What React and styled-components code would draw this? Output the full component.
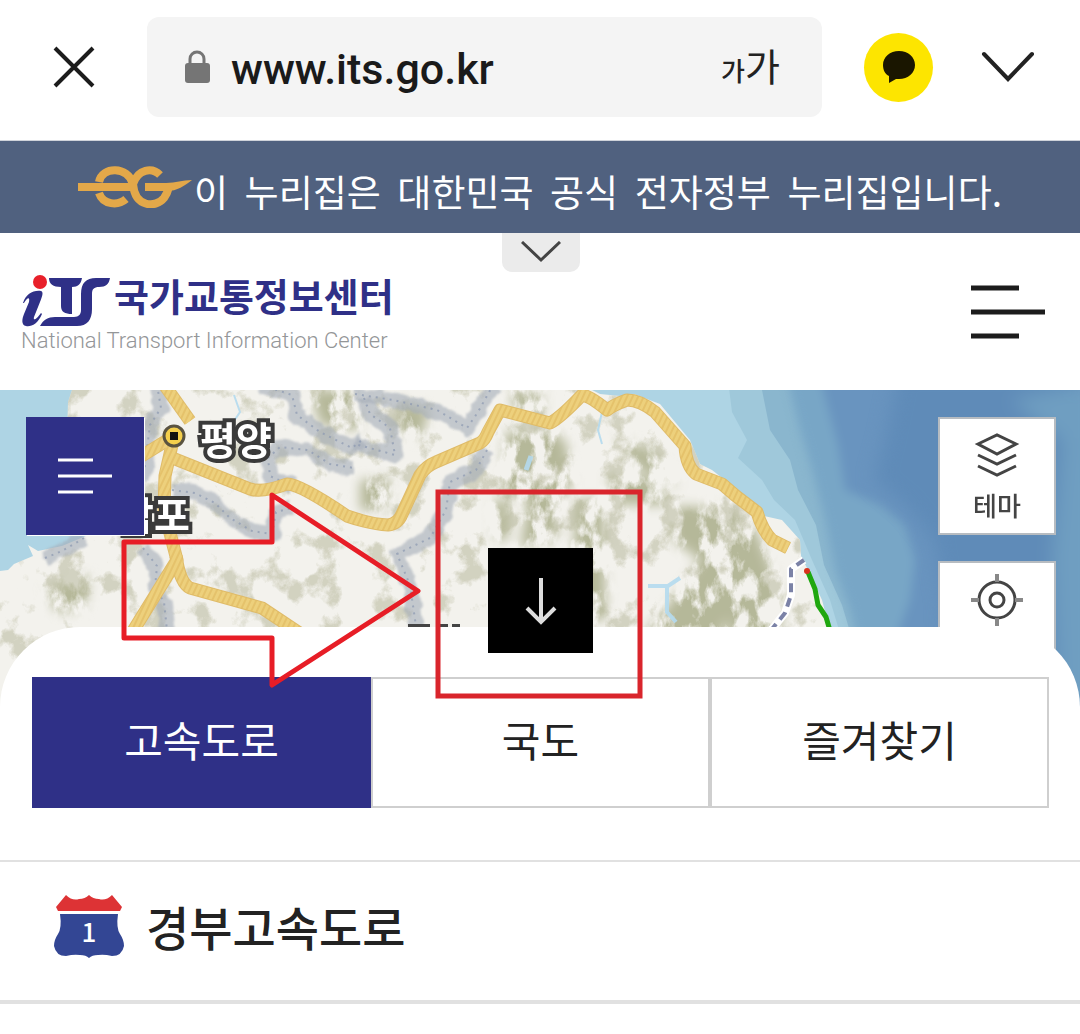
import React from "react";
import styled, { createGlobalStyle } from "styled-components";

const KR = `"Noto Sans CJK KR", "Noto Sans", sans-serif`;
const NAVY = "#2f3087";

const GlobalStyle = createGlobalStyle`
  * { box-sizing: border-box; }
  body { margin: 0; background: #fff; color: #222; font-family: ${KR}; }
  button { margin: 0; padding: 0; border: 0; background: none; color: inherit; font: inherit; cursor: pointer; }
  a { color: inherit; text-decoration: none; }
`;

const Page = styled.div`
  height: 100vh;
  overflow: hidden;
  display: flex;
  flex-direction: column;
`;

const BrowserBar = styled.header`
  flex: none;
  display: flex;
  align-items: center;
  height: 141px;
  padding: 0 45px 6px 46px;
  border-bottom: 1px solid #cfd3da;
`;

const IconButton = styled.button`
  flex: none;
  display: flex;
  align-items: center;
  justify-content: center;
  width: ${(p) => p.$size}px;
  height: ${(p) => p.$size}px;
`;

const AddressBar = styled.div`
  flex: 1;
  min-width: 0;
  display: flex;
  align-items: center;
  height: 100px;
  margin: 0 42px 0 46px;
  padding: 0 42px 0 36px;
  border-radius: 12px;
  background: #f4f4f4;
`;

const UrlInput = styled.input`
  flex: 1;
  min-width: 0;
  margin: 0 0 0 20px;
  padding: 4px 0 0;
  border: 0;
  outline: 0;
  background: none;
  color: #1a1a1a;
  font: 500 43px/56px Roboto, sans-serif;
`;

const TextSizeButton = styled.button`
  flex: none;
  display: flex;
  align-items: baseline;
  color: #222;
  font-size: 38px;
  line-height: 56px;
`;

const SmallGlyph = styled.span`
  font-size: 26px;
  font-weight: 500;
`;

const KakaoButton = styled(IconButton)`
  margin-right: 47px;
  border-radius: 50%;
  background: #fde500;
`;

const GovBanner = styled.div`
  flex: none;
  display: flex;
  align-items: center;
  justify-content: center;
  gap: 2px;
  height: 92px;
  background: #50617f;
  color: #fff;
`;

const GovText = styled.p`
  margin: 0;
  padding-top: 8px;
  font-size: 37px;
  line-height: 54px;
  white-space: pre;
`;

const SiteHeader = styled.div`
  flex: none;
  position: relative;
  display: flex;
  align-items: center;
  justify-content: space-between;
  height: 157px;
  padding: 0 34px 0 21px;
`;

const BannerToggle = styled.button`
  position: absolute;
  top: 0;
  left: 50%;
  display: flex;
  align-items: center;
  justify-content: center;
  width: 78px;
  height: 39px;
  padding-bottom: 2px;
  margin-left: -38px;
  border-radius: 0 0 10px 10px;
  background: #ebebeb;
`;

const Brand = styled.a`
  display: flex;
  flex-direction: column;
  padding-top: 6px;
`;

const BrandTop = styled.span`
  display: flex;
  align-items: center;
  gap: 4px;
  height: 52px;
`;

const BrandName = styled.span`
  margin-top: -12px;
  color: ${NAVY};
  font-size: 38px;
  font-weight: 700;
  line-height: 52px;
`;

const BrandSub = styled.span`
  color: #949698;
  font: 300 22px/28px Roboto, sans-serif;
`;

const MapArea = styled.section`
  flex: none;
  position: relative;
  height: 320px;
  background: #f3f2ec;
`;

const MapCanvas = styled.svg`
  display: block;
  width: 100%;
  height: 100%;

  filter {
    color-interpolation-filters: sRGB;
  }
`;

const MapTools = styled.div`
  position: absolute;
  top: 27px;
  left: 26px;
  right: 24px;
  display: flex;
  align-items: flex-start;
  justify-content: space-between;
`;

const ToolColumn = styled.div`
  display: flex;
  flex-direction: column;
  gap: 26px;
`;

const MapTool = styled.button`
  display: flex;
  flex-direction: column;
  align-items: center;
  justify-content: ${(p) => (p.$center ? "center" : "flex-start")};
  gap: 8px;
  width: 118px;
  height: 118px;
  padding-top: ${(p) => (p.$center ? 0 : 10)}px;
  border: ${(p) => (p.$dark ? "0" : "2px solid #b7bcc1")};
  background: ${(p) => (p.$dark ? NAVY : "#fff")};
  box-shadow: ${(p) => (p.$dark ? "1px 1px 0 #fff" : "none")};
  color: #444;
  font-size: 26px;
  font-weight: 500;
  line-height: 36px;
`;

const Sheet = styled.main`
  flex: none;
  position: relative;
  margin-top: -83px;
  padding-top: 50px;
  border-radius: 80px 80px 0 0;
  background: #fff;
`;

const SheetHandle = styled.button`
  position: absolute;
  top: -79px;
  left: 50%;
  display: flex;
  align-items: center;
  justify-content: center;
  width: 105px;
  height: 105px;
  margin-left: -52px;
  background: #000;
`;

const Tabs = styled.div`
  display: grid;
  grid-template-columns: repeat(3, 1fr);
  margin: 0 31px 52px 32px;
`;

const Tab = styled.button`
  height: 131px;
  padding-bottom: 8px;
  border: 2px solid ${(p) => (p.$active ? NAVY : "#cfcfcf")};
  background: ${(p) => (p.$active ? NAVY : "#fff")};
  color: ${(p) => (p.$active ? "#fff" : "#222")};
  font-size: 42px;
  line-height: 60px;
`;

const RoadList = styled.ul`
  margin: 0;
  padding: 0;
  border-top: 2px solid #e1e1e1;
  list-style: none;
`;

const RoadRow = styled.li`
  border-bottom: 4px solid #e1e1e1;
`;

const RoadLink = styled.a`
  display: flex;
  align-items: center;
  gap: 22px;
  height: 138px;
  padding: 0 54px 10px;
  font-size: 47px;
  font-weight: 500;
  line-height: 68px;
`;

const ShieldBox = styled.span`
  position: relative;
  display: flex;
  align-items: center;
  justify-content: center;
  width: 70px;
  height: 64px;
  color: #fff;
  font-size: 26px;
  line-height: 36px;
`;

const ShieldArt = styled.svg`
  position: absolute;
  inset: 0;
`;

const ShieldNumber = styled.span`
  position: relative;
  padding-top: 10px;
`;

const Marks = styled.svg`
  position: absolute;
  top: 90px;
  left: 110px;
  z-index: 2;
  pointer-events: none;
`;

function Shield({ number }) {
  return (
    <ShieldBox>
      <ShieldArt width="70" height="64" viewBox="0 0 70 64" aria-hidden="true">
        <path fill="#dd3335" d="M2 13 L12 1 Q18 7 25 5 Q31 5 35 1 Q39 5 45 5 Q52 7 58 1 L68 13 L66 17 H4 Z" />
        <path fill="#334694" d="M6 20 H64 Q62 34 66 40 Q70 46 70 52 Q68 62 58 62 Q50 60 44 61 Q38 61 35 64 Q32 61 26 61 Q20 60 12 62 Q2 62 0 52 Q0 46 4 40 Q8 34 6 20 Z" />
      </ShieldArt>
      <ShieldNumber>{number}</ShieldNumber>
    </ShieldBox>
  );
}

const ROADS = [
  "M163 383 L190 421",
  "M174 436 L140 457",
  "M174 436 L165 476 L164 510 L177 560 L115 660",
  "M176 556 Q180 583 190 588 L262 608 L310 640",
  "M170 457 L250 489 Q262 493 287 484 Q300 484 347 516 Q370 524 388 525 Q398 524 402 514 L420 475 Q426 466 436 462 L480 443 Q485 440 488 432 L500 410 L550 423 Q560 418 582 395 Q590 396 607 410 Q615 404 627 400 Q640 400 655 412 L685 446 Q686 466 696 474 L722 484 L736 496 L757 512 Q762 530 772 540 L788 548",
];

const RAILS = [
  "M157 385 L161 408 L150 425 L143 480",
  "M172 490 L195 493 L215 503 L230 518 L252 531 L272 534 L276 512 L292 508",
  "M262 385 L292 395 L297 415 L320 432 L352 448 L362 440",
  "M292 486 L270 476 L268 458 L280 447 L308 450 L330 464 L354 468",
  "M355 394 L393 400 L437 410 L467 428 L478 412 L493 385",
  "M364 398 L370 414 L390 428 L395 455 L355 444",
  "M487 450 L476 470 L450 482 L446 510 L430 538 L397 554 L410 585 L418 640",
  "M143 548 L157 566 L155 588 L164 602 L168 640",
  "M45 558 L62 551 L84 538",
];

function KoreaMap() {
  return (
    <MapCanvas viewBox="0 390 1080 320" preserveAspectRatio="xMidYMid slice" aria-label="지도">
      <defs>
        <filter id="terrain" x="0" y="0" width="100%" height="100%">
          <feTurbulence type="fractalNoise" baseFrequency="0.035 0.03" numOctaves="6" seed="11" />
          <feColorMatrix values="0 0 0 0 0.74  0 0 0 0 0.74  0 0 0 0 0.64  7 0 0 0 -3.9" />
        </filter>
        <filter id="ridge" filterUnits="userSpaceOnUse" x="0" y="390" width="860" height="330">
          <feTurbulence type="fractalNoise" baseFrequency="0.06 0.035" numOctaves="5" seed="4" result="noise" />
          <feColorMatrix in="noise" values="0 0 0 0 0.71  0 0 0 0 0.72  0 0 0 0 0.60  5 0 0 0 -1.9" result="patches" />
          <feGaussianBlur in="SourceAlpha" stdDeviation="6" result="area" />
          <feComposite in="patches" in2="area" operator="in" />
        </filter>
        <filter id="soft"><feGaussianBlur stdDeviation="5" /></filter>
        <filter id="wide"><feGaussianBlur stdDeviation="9" /></filter>
        <filter id="railEdge" filterUnits="userSpaceOnUse" x="0" y="380" width="1080" height="340">
          <feTurbulence type="fractalNoise" baseFrequency="0.08" numOctaves="2" seed="3" result="n" />
          <feDisplacementMap in="SourceGraphic" in2="n" scale="9" xChannelSelector="R" yChannelSelector="G" />
          <feGaussianBlur stdDeviation="1" />
        </filter>
        <pattern id="hatch" width="5" height="5" patternUnits="userSpaceOnUse" patternTransform="rotate(25)">
          <rect width="5" height="5" fill="#edd07c" />
          <rect width="2" height="5" fill="#e5c26b" />
        </pattern>
        <clipPath id="land">
          <path d="M72 390 L68 402 L67 440 L100 530 L62 546 L38 551 L28 545 L33 556 L14 564 L8 570 L0 571 V720 H838 L830 630 L822 600 L808 570 L801 556 L800 540 L782 520 L764 516 L740 492 L712 470 L700 464 L690 440 L660 404 L634 394 L620 396 L600 394 L592 390 Z" />
        </clipPath>
      </defs>
      <rect y="390" width="1080" height="320" fill="#aed4e4" />
      <path fill="#9fc8da" d="M728 380 L732 412 L747 440 L738 458 L762 480 L774 500 L795 520 L812 560 L830 600 L842 640 L850 720 H1080 V380 Z" />
      <path fill="#8ab6ce" d="M760 380 L770 430 L790 460 L798 490 L816 525 L824 565 L842 605 L854 645 L860 720 H1080 V380 Z" />
      <g filter="url(#soft)">
        <path fill="#78a6c6" d="M785 370 L800 430 L812 470 L825 520 L835 570 L850 610 L860 650 L864 730 H1100 V370 Z" />
        <path fill="#6994bf" d="M818 370 L838 445 L845 490 L880 505 L905 525 L915 560 L910 600 L888 660 L880 730 H1100 V370 Z" />
      </g>
      <g filter="url(#wide)">
        <path fill="#5f8bb8" d="M900 370 L885 440 L874 480 L905 505 L934 540 L944 600 L950 730 H1065 L1062 500 L1080 400 V370 Z" />
        <path fill="#6f9ec1" d="M1100 380 L1010 400 L1062 440 L1052 560 L1060 730 H1100 Z" />
      </g>
      <g clipPath="url(#land)">
        <rect y="390" width="850" height="330" fill="#f3f2ed" />
        <rect y="390" width="850" height="330" filter="url(#terrain)" opacity="0.6" />
        <g filter="url(#ridge)">
          <path d="M506 432 L556 430 L574 480 L560 500 L556 540 L520 548 L528 500 L500 490 Z" />
          <path d="M552 440 L566 440 L570 476 L558 478 Z" />
          <path d="M494 500 L510 500 L508 540 L494 540 Z" />
          <path d="M576 500 L604 500 L606 620 L570 620 Z" />
          <path d="M606 476 L650 476 L670 505 L620 505 Z" />
          <path d="M676 506 L724 508 L742 550 L736 600 L718 640 L640 640 L680 590 L700 560 L672 540 Z" />
          <path d="M725 505 L756 530 L784 600 L778 650 L730 650 L722 560 Z" />
          <path d="M44 590 L90 574 L84 610 L58 612 Z" />
          <path d="M612 436 L652 450 L680 486 L640 470 Z" />
          <path d="M400 400 L430 410 L420 440 L396 430 Z" />
          <path d="M310 390 L360 390 L360 430 L320 425 Z" />
          <path d="M360 480 L390 478 L390 510 L360 510 Z" />
          <path d="M510 390 L545 395 L540 420 L515 410 Z" />
        </g>
        <g fill="none" stroke="#b4daee" strokeWidth="2" opacity="0.9">
          <path d="M234 395 L240 412 L232 424" />
          <path d="M648 586 L668 586 L680 578 M667 586 L667 612 L676 622" strokeWidth="4" />
          <path d="M602 412 L598 430 L602 444" />
          <path d="M526 470 L531 456" strokeWidth="5" />
        </g>
      </g>
      <g fill="none" strokeLinejoin="round">
        <g filter="url(#railEdge)">
          {RAILS.map((d) => (
            <path key={d} d={d} stroke="#a3acb8" strokeWidth="15" opacity="0.6" />
          ))}
        </g>
        {RAILS.map((d) => (
          <path key={d} d={d} stroke="#8b98b0" strokeWidth="2" strokeDasharray="2 5" opacity="0.7" />
        ))}
        {ROADS.map((d) => (
          <path key={d} d={d} stroke="#dfbb68" strokeWidth="13" />
        ))}
        {ROADS.map((d) => (
          <path key={d} d={d} stroke="url(#hatch)" strokeWidth="11" />
        ))}
        <path d="M804 560 L791 569 L791 595 L785 613 L768 634" stroke="#fff" strokeWidth="8" />
        <path d="M804 560 L791 569 L791 595 L785 613 L768 634" stroke="#7b82a6" strokeWidth="4" strokeDasharray="9 6" />
        <path d="M808 572 L815 589 L818 605 L826 617 L831 634" stroke="#1fa70f" strokeWidth="5" />
      </g>
      <circle cx="807" cy="571" r="3" fill="#d8321c" />
      <circle cx="174" cy="436" r="10" fill="#f4cf4c" stroke="#5a5340" strokeWidth="3" />
      <rect x="170" y="432" width="8" height="8" fill="#111" />
      <g fontFamily={KR} fontSize="39" fontWeight="700" fill="#fff" stroke="#3a3a3a" strokeWidth="8" strokeLinejoin="miter" paintOrder="stroke">
        <text x="200" y="455">평양</text>
        <text x="118" y="530">남포</text>
      </g>
      <path d="M408 626 H430 M436 626 H448 M452 626 H460" stroke="#444" strokeWidth="4" />
    </MapCanvas>
  );
}

export default function App() {
  return (
    <Page>
      <GlobalStyle />
      <BrowserBar>
        <IconButton $size={55} aria-label="닫기">
          <svg width="42" height="42" viewBox="0 0 42 42" fill="none" stroke="#1c1c1c" strokeWidth="4">
            <path d="M2 2 L40 40 M40 2 L2 40" />
          </svg>
        </IconButton>
        <AddressBar>
          <svg width="28" height="34" viewBox="0 0 28 34" aria-hidden="true">
            <path d="M7 14 V9 a7 7 0 0 1 14 0 V14" fill="none" stroke="#757575" strokeWidth="3" />
            <rect x="2" y="13" width="25" height="20" rx="3" fill="#757575" />
          </svg>
          <UrlInput aria-label="주소" defaultValue="www.its.go.kr" />
          <TextSizeButton aria-label="글자 크기">
            <SmallGlyph>가</SmallGlyph>가
          </TextSizeButton>
        </AddressBar>
        <KakaoButton $size={69} aria-label="카카오톡">
          <svg width="34" height="34" viewBox="0 0 34 34">
            <path fill="#1a1600" d="M17 1 C26 1 33 7 33 15 C33 23 26 29 17 29 L14 29 L7 33 L7 26 C3 24 1 20 1 15 C1 7 8 1 17 1 Z" />
          </svg>
        </KakaoButton>
        <IconButton $size={55} aria-label="접기">
          <svg width="54" height="32" viewBox="0 0 54 32" fill="none" stroke="#222" strokeWidth="4" strokeLinecap="round">
            <path d="M3 3 L27 28 L51 3" />
          </svg>
        </IconButton>
      </BrowserBar>

      <GovBanner>
        <svg width="114" height="42" viewBox="0 0 114 42" fill="none" stroke="#e3a849" strokeWidth="8" aria-hidden="true">
          <path d="M0 21 H54" />
          <path d="M21 16 C24 0 50 0 55 18 C57 42 78 42 86 32 C89 28 90 25 91 21" />
          <path d="M82 9 C74 1 60 3 55 18 M21 27 C25 39 40 40 48 33" />
          <path d="M67 21 H92" />
          <path d="M88 17 C98 17 104 14 114 14 C106 20 100 25 88 25 Z" fill="#e3a849" stroke="none" />
        </svg>
        <GovText>이  누리집은  대한민국  공식  전자정부  누리집입니다.</GovText>
      </GovBanner>

      <SiteHeader>
        <Brand href="#">
          <BrandTop>
            <svg width="89" height="52" viewBox="0 0 89 52" aria-hidden="true">
              <circle cx="19" cy="7" r="7" fill="#e8202a" />
              <g fill={NAVY}>
                <path d="M2 28 C5 19 12 15 20 16 C23 17 21 22 19 27 L13 42 C12 46 15 45 20 38 L21 39 C17 49 10 52 5 51 C0 50 1 44 3 39 L8 27 C9 21 6 23 3 28 Z" />
                <path d="M28 3 H61 C60 9 57 12 51 12 V39 C44 39 40 37 40 31 V12 C32 12 28 9 28 3 Z" />
                <path d="M89 3 C88 9 85 12 78 12 C73 12 71 14 71 19 V34 C71 45 66 51 56 51 H19 C22 45 27 42 34 42 H53 C58 42 60 39 60 35 V19 C60 8 65 3 75 3 Z" />
              </g>
            </svg>
            <BrandName>국가교통정보센터</BrandName>
          </BrandTop>
          <BrandSub>National Transport Information Center</BrandSub>
        </Brand>
        <BannerToggle aria-label="펼치기">
          <svg width="40" height="22" viewBox="0 0 40 22" fill="none" stroke="#444" strokeWidth="3">
            <path d="M1 1 L20 19 L39 1" />
          </svg>
        </BannerToggle>
        <IconButton $size={75} aria-label="메뉴">
          <svg width="75" height="54" viewBox="0 0 75 54" stroke="#1c1c1c" strokeWidth="5">
            <path d="M0 3 H48 M0 27 H74 M0 51 H48" />
          </svg>
        </IconButton>
      </SiteHeader>

      <MapArea>
        <KoreaMap />
        <MapTools>
          <MapTool $dark $center aria-label="목록">
            <svg width="54" height="38" viewBox="0 0 54 38" stroke="#fff" strokeWidth="3">
              <path d="M0 3 H35 M0 19 H54 M0 35 H35" />
            </svg>
          </MapTool>
          <ToolColumn>
            <MapTool>
              <svg width="46" height="50" viewBox="0 0 46 50" fill="none" stroke="#444" strokeWidth="3">
                <path d="M4 15 L23 6 L42 15 L23 25 Z M4 26 L23 35 L42 26 M4 37 L23 46 L42 37" />
              </svg>
              테마
            </MapTool>
            <MapTool aria-label="현재 위치">
              <svg width="54" height="54" viewBox="0 0 54 54" fill="none" stroke="#444" strokeWidth="3">
                <circle cx="27" cy="27" r="18" />
                <circle cx="27" cy="27" r="7" />
                <path stroke="#888" strokeWidth="4" d="M27 1 V9 M27 45 V53 M1 27 H9 M45 27 H53" />
              </svg>
            </MapTool>
          </ToolColumn>
        </MapTools>
        <Marks width="540" height="230" viewBox="110 480 540 230" fill="none" stroke="#e71d26" strokeWidth="5" aria-hidden="true">
          <path strokeLinejoin="round" d="M124 542 H272 V495 L418 591 L272 685 V638 H124 Z" />
          <rect x="438" y="492" width="202" height="204" stroke="#d9252c" />
        </Marks>
      </MapArea>

      <Sheet>
        <SheetHandle aria-label="내리기">
          <svg width="32" height="48" viewBox="0 0 32 48" fill="none" stroke="#ddd" strokeWidth="4">
            <path d="M16 1 V45 M2 31 L16 45 L30 31" />
          </svg>
        </SheetHandle>
        <Tabs role="tablist">
          <Tab role="tab" aria-selected="true" $active>고속도로</Tab>
          <Tab role="tab" aria-selected="false">국도</Tab>
          <Tab role="tab" aria-selected="false">즐겨찾기</Tab>
        </Tabs>
        <RoadList>
          <RoadRow>
            <RoadLink href="#">
              <Shield number="1" />
              경부고속도로
            </RoadLink>
          </RoadRow>
        </RoadList>
      </Sheet>
    </Page>
  );
}
